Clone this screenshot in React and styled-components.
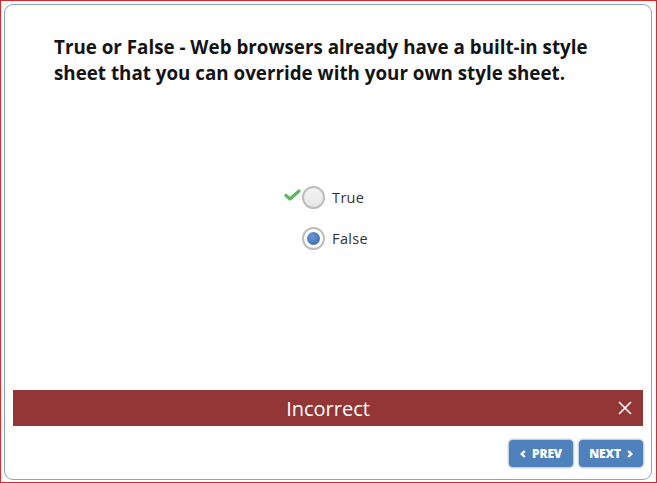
import React, { useState } from "react";
import styled, { createGlobalStyle } from "styled-components";

const GlobalStyle = createGlobalStyle`
  * { box-sizing: border-box; }
  html, body { margin: 0; padding: 0; background: #ffffff; }
  body { font-family: "Open Sans", "DejaVu Sans", sans-serif; }
`;

const Frame = styled.div`
  width: 657px;
  height: 483px;
  border: 1px solid #e0262b;
  padding: 3px 4px 2px 3px;
  display: flex;
`;

const Card = styled.div`
  flex: 1;
  display: flex;
  flex-direction: column;
  border: 1px solid #8aa3c4;
  border-radius: 9px;
  background: #ffffff;
  padding: 0 8px 12px 8px;
`;

const Question = styled.h2`
  margin: 0;
  padding: 29px 0 0 41px;
  max-width: 590px;
  font-size: 18.8px;
  line-height: 26px;
  font-weight: 700;
  color: #141414;
`;

const Options = styled.div`
  align-self: center;
  display: flex;
  flex-direction: column;
  gap: 18px;
  margin-top: 100px;
  margin-left: 14px;
`;

const Option = styled.label`
  position: relative;
  display: flex;
  align-items: center;
  gap: 7px;
  font-size: 14.5px;
  letter-spacing: 0.3px;
  color: #333333;
  cursor: pointer;
`;

const Check = styled.svg`
  position: absolute;
  left: -18px;
  top: 3px;
`;

const Circle = styled.span`
  width: 23px;
  height: 23px;
  border-radius: 50%;
  border: 2px solid #bdbdbd;
  background: ${(p) => (p.checked ? "#ffffff" : "linear-gradient(#f4f4f4, #e6e6e6)")};
  display: flex;
  align-items: center;
  justify-content: center;
  &::after {
    content: "";
    display: ${(p) => (p.checked ? "block" : "none")};
    width: 13px;
    height: 13px;
    border-radius: 50%;
    background: radial-gradient(circle at 40% 35%, #6a98d6, #2f62a8);
  }
`;

const Spacer = styled.div`
  flex: 1;
`;

const Feedback = styled.div`
  position: relative;
  height: 36px;
  background: #953636;
  color: #ffffff;
  font-size: 20px;
  display: flex;
  align-items: center;
  justify-content: center;
`;

const Close = styled.button`
  position: absolute;
  right: 9px;
  top: 9px;
  width: 18px;
  height: 18px;
  padding: 0;
  border: none;
  background: none;
  cursor: pointer;
  display: flex;
`;

const Nav = styled.div`
  display: flex;
  justify-content: flex-end;
  gap: 6px;
  margin-top: 14px;
`;

const NavButton = styled.button`
  width: 64px;
  height: 27px;
  border: none;
  border-radius: 4px;
  background: #4f81bd;
  box-shadow: 0 0 2px 1px rgba(40, 70, 120, 0.35);
  color: #ffffff;
  font-family: "Open Sans", sans-serif;
  font-size: 12px;
  font-weight: 800;
  letter-spacing: -0.2px;
  display: flex;
  align-items: center;
  justify-content: center;
  gap: 6px;
  cursor: pointer;
`;

const Chevron = ({ dir }) => (
  <svg width="6" height="8" viewBox="0 0 6 8">
    <path
      d={dir === "left" ? "M4.8 1 L1.6 4 L4.8 7" : "M1.2 1 L4.4 4 L1.2 7"}
      fill="none"
      stroke="#ffffff"
      strokeWidth="2.2"
    />
  </svg>
);

const answers = ["True", "False"];

const App = () => {
  const [selected, setSelected] = useState("False");

  return (
    <>
      <GlobalStyle />
      <Frame>
        <Card>
          <Question>
            True or False - Web browsers already have a built-in style sheet
            that you can override with your own style sheet.
          </Question>
          <Options>
            {answers.map((a) => (
              <Option key={a} onClick={() => setSelected(a)}>
                {a === "True" && (
                  <Check width="17" height="12" viewBox="0 0 17 12">
                    <path
                      d="M2 6.5 L6 10 L15 2"
                      fill="none"
                      stroke="#5cb85c"
                      strokeWidth="3.2"
                      strokeLinejoin="round"
                      strokeLinecap="round"
                    />
                  </Check>
                )}
                <Circle checked={selected === a} />
                {a}
              </Option>
            ))}
          </Options>
          <Spacer />
          <Feedback>
            Incorrect
            <Close aria-label="close">
              <svg width="18" height="18" viewBox="0 0 18 18">
                <path d="M3 3 L15 15 M15 3 L3 15" stroke="#ffffff" strokeWidth="1.6" />
              </svg>
            </Close>
          </Feedback>
          <Nav>
            <NavButton>
              <Chevron dir="left" />
              PREV
            </NavButton>
            <NavButton>
              NEXT
              <Chevron dir="right" />
            </NavButton>
          </Nav>
        </Card>
      </Frame>
    </>
  );
};

export default App;
